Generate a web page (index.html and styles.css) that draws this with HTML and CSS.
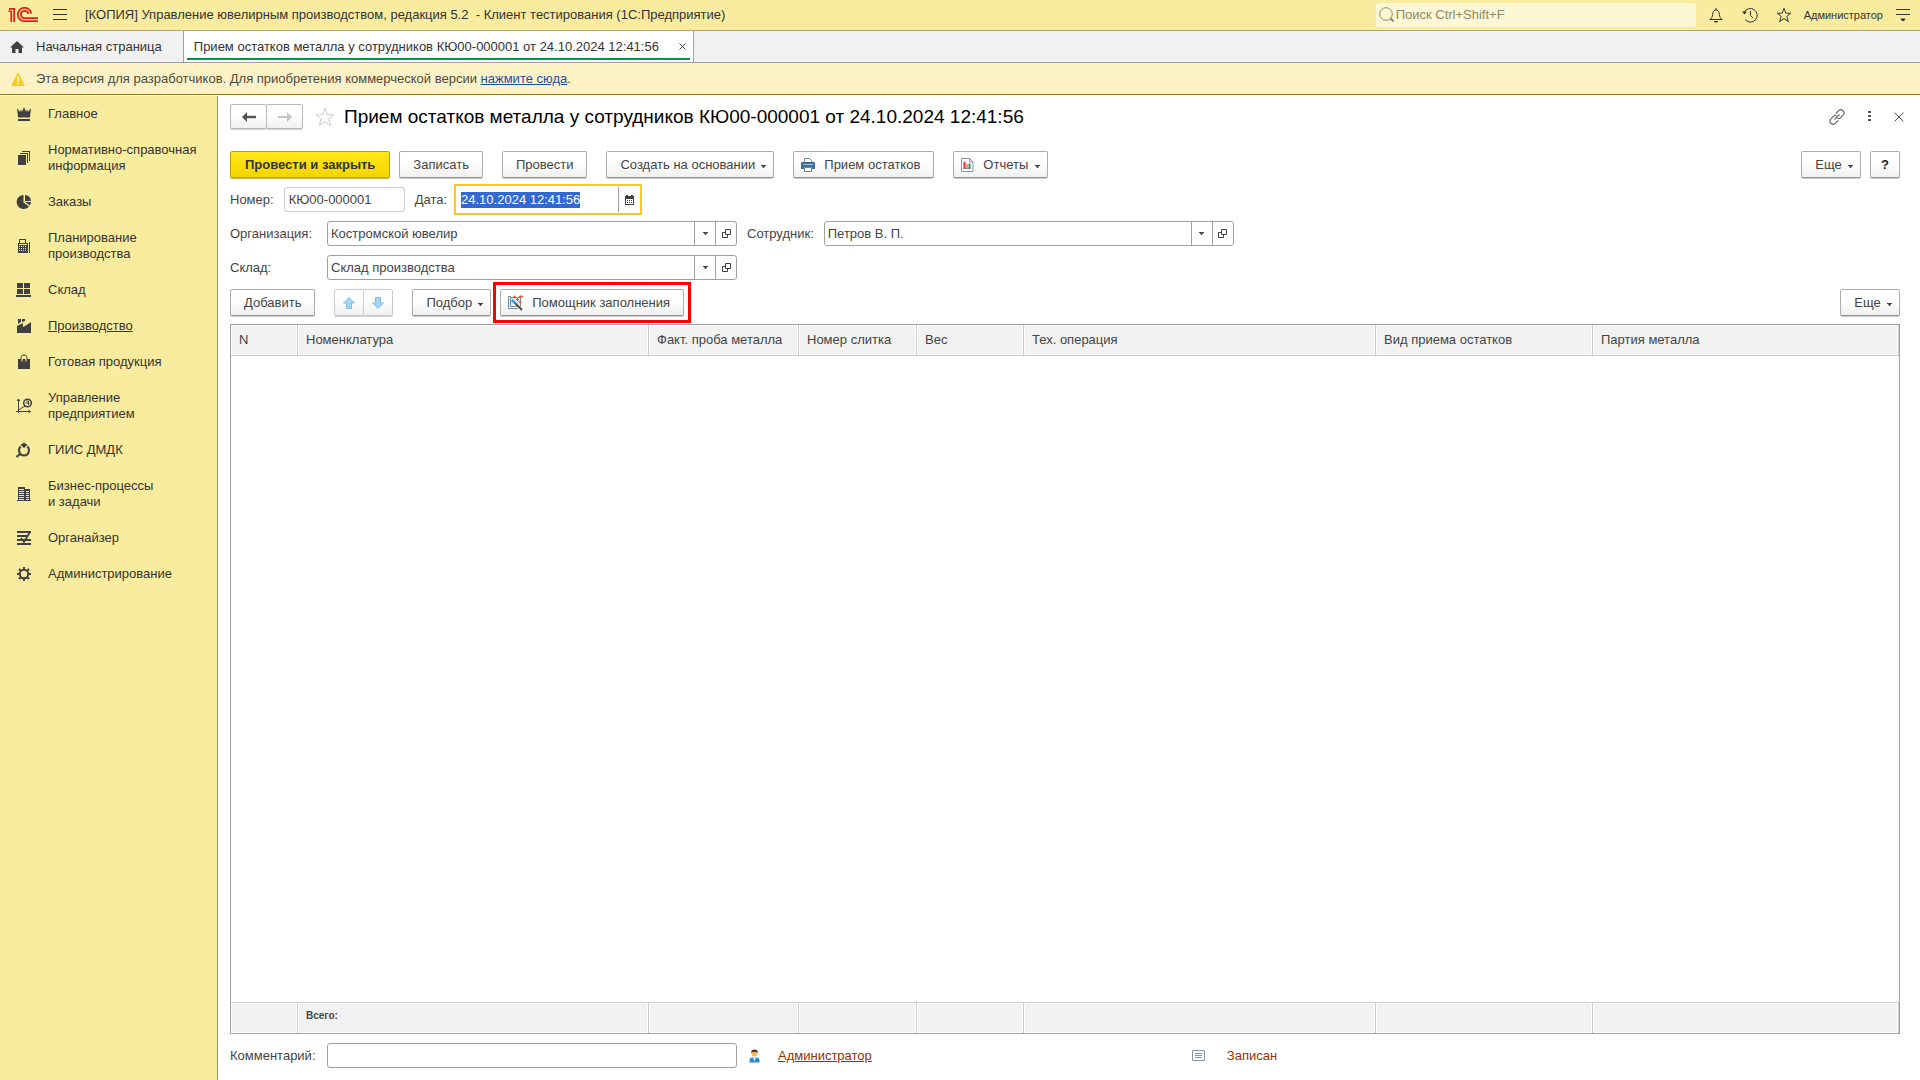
FILE: index.html
```html
<!DOCTYPE html>
<html lang="ru">
<head>
<meta charset="utf-8">
<meta name="viewport" content="width=device-width, initial-scale=1">
<title>Прием остатков металла у сотрудников КЮ00-000001</title>
<link rel="stylesheet" href="styles.css">
</head>
<body>
<svg class="defs" aria-hidden="true">
  <symbol id="caret" viewBox="0 0 5 3"><path d="M0 0h5v1H4L3 3H2L1 1H0z" fill="#404040"/></symbol>
  <symbol id="open" viewBox="0 0 9 9"><path d="M3.500.5h5v5h-5zM3 3.500H.5v5h5V6" fill="none" stroke="#404040"/></symbol>
</svg>

<header class="topbar">
  <svg class="logo" viewBox="0 0 30 16" fill="none" stroke="#d9251d" stroke-width="1.800"><path d="M.5 4.200h2.300M3.300 4v11M1 1.800h5.200V15M23.200 6.500A6.700 6.700 0 1 0 16.500 14.200H30M20.300 7A3.700 3.700 0 1 0 16.500 11.200H30"/></svg>
  <button class="icon-btn" aria-label="Меню"><svg width="14" height="12" viewBox="0 0 14 12"><path d="M0 .5h14M0 5.500h14M0 10.500h14" stroke="#333"/></svg></button>
  <h1 class="app-title">[КОПИЯ] Управление ювелирным производством, редакция 5.2&nbsp; - Клиент тестирования (1С:Предприятие)</h1>
  <label class="search">
    <svg width="16" height="16" viewBox="0 0 16 16" fill="none" stroke="#8f8a6b"><circle cx="7" cy="7" r="6.300"/><path d="M11.500 11.500l3 3" stroke-width="2"/></svg>
    <input type="text" placeholder="Поиск Ctrl+Shift+F" aria-label="Поиск">
  </label>
  <div class="top-tools">
    <button class="icon-btn" aria-label="Уведомления"><svg width="16" height="16" viewBox="0 0 16 16" fill="none" stroke="#333"><path d="M1.500 12.500h13M2.500 12c2-1.500 2-4 2.500-6.500.4-1.800 1.500-2.500 3-2.500s2.600.7 3 2.500c.5 2.500.5 5 2.500 6.500M8 3V1"/><path d="M5.500 14h5L9 15.500H7z" fill="#333" stroke="none"/></svg></button>
    <button class="icon-btn" aria-label="История"><svg width="16" height="16" viewBox="0 0 16 16" fill="none" stroke="#333"><path d="M2.200 5.500A6.800 6.800 0 1 1 3 12.500M8.500 4v4.500l2.500 2.500"/><path d="M0 4.500h5L2.500 7.500z" fill="#333" stroke="none"/></svg></button>
    <button class="icon-btn" aria-label="Избранное"><svg width="16" height="16" viewBox="0 0 16 16" fill="none" stroke="#333"><path d="M8 1.300l1.800 4.900h5l-4 3.200 1.500 5.200L8 11.600l-4.300 3 1.500-5.200-4-3.200h5z"/></svg></button>
  </div>
  <span class="user">Администратор</span>
  <button class="icon-btn" aria-label="Сервис"><svg width="14" height="14" viewBox="0 0 14 14"><path d="M0 1.500h14M0 6.500h14" stroke="#333"/><path d="M4.500 10.500h5L8 13H6z" fill="#333"/></svg></button>
</header>

<nav class="tabs">
  <a class="tab home" href="#"><svg width="14" height="12" viewBox="0 0 14 12"><path d="M7 0l7 6.500h-2V12H8.500V8h-3v4H2V6.500H0z" fill="#404040"/></svg>Начальная страница</a>
  <div class="tab current"><a href="#">Прием остатков металла у сотрудников КЮ00-000001 от 24.10.2024 12:41:56</a><button class="icon-btn" aria-label="Закрыть вкладку"><svg width="7" height="7" viewBox="0 0 7 7"><path d="M.5.5l6 6M6.500.5l-6 6" stroke="#444"/></svg></button></div>
</nav>

<div class="notice">
  <svg width="14" height="14" viewBox="0 0 14 14"><path d="M7 0l7 14H0z" fill="#fbc91b"/><path d="M7 4.500v5M7 10.500v2" stroke="#fff" stroke-width="1.500"/></svg>
  <p>Эта версия для разработчиков. Для приобретения коммерческой версии <a href="#">нажмите сюда</a>.</p>
</div>

<div class="workspace">
  <nav class="sidebar">
    <a href="#"><svg viewBox="0 0 16 16"><path d="M1 2l3 4L5 3l1 3L8 1l2 5 1-3 1 3 3-4-1 9.500H2zM2 13h12v2H2z"/></svg><span>Главное</span></a>
    <a href="#"><svg viewBox="0 0 16 16"><path d="M2 5h8v10H2zM4 3h8v10h-1V4H4zM6 1h8v10h-1V2H6z"/></svg><span>Нормативно-справочная информация</span></a>
    <a href="#"><svg viewBox="0 0 16 16"><path d="M7.500 1v7.500L13 12.500A7 7 0 1 1 7.500 1zM9 1a6 6 0 0 1 6 6H9zM9 8h6a6 6 0 0 1-1.200 3.500z"/></svg><span>Заказы</span></a>
    <a href="#"><svg viewBox="0 0 16 16"><path fill-rule="evenodd" d="M2 5h1V1h7v4h2v10H2zM4 2v3h5V2zM3 6v1h8V6zm0 2v1h1V8zm2 0v1h1V8zm2 0v1h1V8zm2 0v1h1V8zm-6 2v1h1v-1zm2 0v1h1v-1zm2 0v1h1v-1zm2 0v1h1v-1zm-6 2v1h1v-1zm2 0v1h1v-1zm2 0v1h1v-1zm2 0v1h1v-1zM13 4h1v11h-1z"/></svg><span>Планирование производства</span></a>
    <a href="#"><svg viewBox="0 0 16 16"><path d="M1 1h6v5H1zM8 1h6v5H8zM1 7h6v5H1zM8 7h6v5H8zM0 13h15v2H0z"/></svg><span>Склад</span></a>
    <a href="#" class="active"><svg viewBox="0 0 16 16"><path d="M1 15V8l6-3v4l2-1 6-4v11zM2 1h3v3L2 6zM6 1h3v2L6 4z"/></svg><span>Производство</span></a>
    <a href="#"><svg viewBox="0 0 16 16"><path d="M2 5h12v10H2z"/><path d="M5 7V3.500Q5 1 8 1t3 2.500V7" fill="none" stroke="#404040"/><path d="M6 5v2.500M10 5v2.500" stroke="#faec9e"/></svg><span>Готовая продукция</span></a>
    <a href="#"><svg viewBox="0 0 16 16"><path d="M2.500 1v14M0 13.500h14M3 12l4-3 3-1M1 3l1.500-2L4 3M12.500 12l2 1.500-2 1.500" fill="none" stroke="#404040"/><circle cx="11.500" cy="5" r="3.800" fill="none" stroke="#404040" stroke-width="1.500"/><path d="M10.500 3h2v4M9.500 5h4" fill="none" stroke="#404040"/></svg><span>Управление предприятием</span></a>
    <a href="#"><svg viewBox="0 0 16 16"><path d="M4.500 3L8 .5 11.500 3 8 6z"/><path d="M4.500 4.500C1.500 8 3.500 13.500 8 13.500S14.500 8 11.500 4.500M4 12l-3.500 3" fill="none" stroke="#404040" stroke-width="2"/></svg><span>ГИИС ДМДК</span></a>
    <a href="#"><svg viewBox="0 0 16 16"><path fill-rule="evenodd" d="M2 1h7v2h5v11h1v1H1v-1h1zM3 3v1h5V3zm0 2v1h5V5zm0 2v1h5V7zm0 2v1h5V9zm0 2v1h5v-1zm0 2v1h5v-1zm7-8v1h3V5zm0 2v1h3V7zm0 2v1h3V9zm0 2v1h3v-1zm0 2v1h3v-1z"/></svg><span>Бизнес-процессы<br>и задачи</span></a>
    <a href="#"><svg viewBox="0 0 16 16"><path d="M1 2h14M1 6h11M1 10h14M1 14h14M5 8l3 4 6-10" fill="none" stroke="#404040" stroke-width="1.800"/></svg><span>Органайзер</span></a>
    <a href="#"><svg viewBox="0 0 16 16"><circle cx="8" cy="8" r="4.200" fill="none" stroke="#404040" stroke-width="2"/><path d="M8 1v2.500M8 12.500V15M1 8h2.500M12.500 8H15M3 3l2 2M11 11l2 2M13 3l-2 2M5 11l-2 2" stroke="#404040" stroke-width="2"/></svg><span>Администрирование</span></a>
  </nav>

  <main class="document">
    <div class="doc-head">
      <div class="btn-pair nav-pair">
        <button class="btn" aria-label="Назад"><svg width="14" height="10" viewBox="0 0 14 10"><path d="M0 5l5-5v3.800h9v2.400H5V10z" fill="#555"/></svg></button>
        <button class="btn" aria-label="Вперед" disabled><svg width="14" height="10" viewBox="0 0 14 10"><path d="M14 5L9 0v4H0v2h9v4z" fill="#c4c4c4"/></svg></button>
      </div>
      <button class="icon-btn" aria-label="В избранное"><svg width="20" height="20" viewBox="0 0 20 20"><path d="M10 1.500l2.300 6.300H19l-5.300 4.100 1.900 6.600L10 14.700l-5.600 3.800 1.900-6.600L1 7.800h6.700z" fill="none" stroke="#ccc"/></svg></button>
      <h2>Прием остатков металла у сотрудников КЮ00-000001 от 24.10.2024 12:41:56</h2>
      <div class="doc-tools">
        <button class="icon-btn" aria-label="Ссылка"><svg width="16" height="16" viewBox="0 0 16 16" fill="none" stroke="#666" stroke-width="1.200"><path d="M7 4.500l2.500-2.700a3 3 0 0 1 4.500 4.400l-2.500 2.600q-1.500 1.200-3 .4M9 11.500l-2.500 2.700A3 3 0 0 1 2 9.800l2.500-2.600q1.500-1.200 3-.4M5.500 10.500l5-5"/></svg></button>
        <button class="icon-btn" aria-label="Дополнительно"><svg width="3" height="11" viewBox="0 0 3 11"><path d="M0 0h3v2H0zM0 4h3v2H0zM0 8h3v2H0z" fill="#555"/></svg></button>
        <button class="icon-btn" aria-label="Закрыть"><svg width="10" height="10" viewBox="0 0 10 10"><path d="M.5.5l9 9M9.500.5l-9 9" stroke="#555"/></svg></button>
      </div>
    </div>

    <div class="toolbar">
      <button class="btn primary">Провести и закрыть</button>
      <button class="btn">Записать</button>
      <button class="btn apart">Провести</button>
      <button class="btn apart">Создать на основании<svg class="caret"><use href="#caret"/></svg></button>
      <button class="btn apart with-icon"><svg width="14" height="14" viewBox="0 0 14 14"><path d="M3.500 4V.5h5l2 2V4" fill="#fff" stroke="#6c87a3"/><path d="M0 5q0-1 1-1h12q1 0 1 1v6h-3V9H3v2H0z" fill="#3f6c97"/><path d="M2 6.500h10" stroke="#a9c6de"/><path d="M3.500 9.500h7v4h-7z" fill="#fff" stroke="#6c87a3"/></svg>Прием остатков</button>
      <button class="btn apart with-icon"><svg width="13" height="14" viewBox="0 0 13 14"><path d="M.5.5h8l3.500 3.500v9.500H.5z" fill="#fff" stroke="#8496a5"/><path d="M8.500.5V4H12" fill="none" stroke="#8496a5"/><path d="M3.500 4v6" stroke="#e22" stroke-width="2"/><path d="M6 6v4" stroke="#e22"/><path d="M8.500 5.500V10" stroke="#1a9b3a" stroke-width="2"/><path d="M2 10.500h8" stroke="#789"/></svg>Отчеты<svg class="caret"><use href="#caret"/></svg></button>
      <button class="btn more push">Еще<svg class="caret"><use href="#caret"/></svg></button>
      <button class="btn help">?</button>
    </div>

    <form class="fields">
      <div class="row">
        <label for="number">Номер:</label>
        <input class="box number" id="number" type="text" value="КЮ00-000001" readonly>
        <label for="date">Дата:</label>
        <div class="date">
          <input id="date" type="text" value="24.10.2024 12:41:56" autofocus>
          <button type="button" aria-label="Выбрать дату"><svg width="9" height="10" viewBox="0 0 9 10"><path fill-rule="evenodd" d="M0 1h1V0h2v1h3V0h2v1h1v9H0zM1 4v5h7V4z" fill="#404040"/><path d="M2 5.500h5M2 7.500h5" stroke="#404040" stroke-dasharray="1 1"/></svg></button>
        </div>
      </div>
      <div class="row">
        <label class="key" for="org">Организация:</label>
        <div class="box picker"><input id="org" type="text" value="Костромской ювелир"><button type="button" aria-label="Список организаций"><svg class="caret"><use href="#caret"/></svg></button><button type="button" aria-label="Открыть организацию"><svg width="9" height="9"><use href="#open"/></svg></button></div>
        <label for="employee">Сотрудник:</label>
        <div class="box picker"><input id="employee" type="text" value="Петров В. П."><button type="button" aria-label="Список сотрудников"><svg class="caret"><use href="#caret"/></svg></button><button type="button" aria-label="Открыть сотрудника"><svg width="9" height="9"><use href="#open"/></svg></button></div>
      </div>
      <div class="row">
        <label class="key" for="store">Склад:</label>
        <div class="box picker"><input id="store" type="text" value="Склад производства"><button type="button" aria-label="Список складов"><svg class="caret"><use href="#caret"/></svg></button><button type="button" aria-label="Открыть склад"><svg width="9" height="9"><use href="#open"/></svg></button></div>
      </div>
    </form>

    <div class="toolbar table-tools">
      <button class="btn">Добавить</button>
      <div class="btn-pair move-pair apart">
        <button class="btn" aria-label="Вверх" disabled><svg width="12" height="12" viewBox="0 0 12 12"><path d="M6 .5L11.500 6H8.500v5.500h-5V6H.5z" fill="#9fd6f5" stroke="#86bfe0"/></svg></button>
        <button class="btn" aria-label="Вниз" disabled><svg width="12" height="12" viewBox="0 0 12 12"><path d="M6 11.500L.5 6h3V.5h5V6h3z" fill="#9fd6f5" stroke="#86bfe0"/></svg></button>
      </div>
      <button class="btn apart pick">Подбор<svg class="caret"><use href="#caret"/></svg></button>
      <div class="highlight"><button class="btn with-icon"><svg width="15" height="16" viewBox="0 0 15 16"><path d="M3 1.500H.5v12H10" fill="none" stroke="#6f8fa8"/><path d="M2.500 2.500h10v9h-10z" fill="#e3f0f9" stroke="#6f8fa8"/><path d="M4 5l3 3" stroke="#3b9be0" stroke-width="2.500"/><path d="M7 8l7 7" stroke="#6b4a1c" stroke-width="2"/><path d="M5 2h3M6.500.5v3M11 1.500h4M13 0v3.500M8 4.500h3M9.500 3v3M10.500 7h3M12 5.500v3" stroke="#f04a28"/></svg>Помощник заполнения</button></div>
      <button class="btn more push">Еще<svg class="caret"><use href="#caret"/></svg></button>
    </div>

    <div class="grid">
      <table>
        <colgroup><col class="c-n"><col class="c-item"><col class="c-fine"><col class="c-bar"><col class="c-weight"><col class="c-op"><col class="c-kind"><col></colgroup>
        <thead><tr><th>N</th><th>Номенклатура</th><th>Факт. проба металла</th><th>Номер слитка</th><th>Вес</th><th>Тех. операция</th><th>Вид приема остатков</th><th>Партия металла</th></tr></thead>
        <tbody><tr><td colspan="8"></td></tr></tbody>
        <tfoot><tr><td></td><td>Всего:</td><td></td><td></td><td></td><td></td><td></td><td></td></tr></tfoot>
      </table>
    </div>

    <footer class="doc-foot">
      <label class="key" for="comment">Комментарий:</label>
      <input class="box comment" id="comment" type="text">
      <svg width="11" height="14" viewBox="0 0 11 14"><path d="M.5 13.500V11q0-2.500 3-2.500h4q3 0 3 2.500v2.500z" fill="#2f8cc4"/><path d="M4 8.500h3L5.500 12z" fill="#fff"/><circle cx="5.500" cy="4.500" r="3" fill="#f3b765"/><path d="M2 4.500Q2 .5 5.500.5T9 4.500L8 3H3z" fill="#4a3a25"/></svg>
      <a class="author" href="#">Администратор</a>
      <div class="state"><svg width="13" height="11" viewBox="0 0 13 11"><path d="M.5.5h12v10H.5z" fill="#fff" stroke="#8496a5"/><path d="M3 3.500h7M3 5.500h7M3 7.500h7" stroke="#8496a5"/></svg><span>Записан</span></div>
    </footer>
  </main>
</div>
<script>document.getElementById('date').select();</script>
</body>
</html>
```
FILE: styles.css
```css
* { box-sizing: border-box; }
body {
  margin: 0;
  min-height: 100vh;
  display: flex;
  flex-direction: column;
  background: #fff;
  color: #333;
  font: 13px/16px "Liberation Sans", Arial, sans-serif;
}
.defs { position: absolute; width: 0; height: 0; }
svg { display: block; flex: none; }
button, input { font: inherit; color: inherit; }
h1, h2, p { margin: 0; font-weight: normal; }
.icon-btn {
  display: flex;
  align-items: center;
  justify-content: center;
  padding: 0;
  border: 0;
  background: none;
}

/* Application bar */
.topbar {
  display: flex;
  align-items: center;
  height: 31px;
  padding: 0 10px 0 8px;
  background: #faec9e;
  border-bottom: 1px solid #b0a870;
}
.logo { width: 30px; height: 16px; margin-right: 15px; }
.app-title { flex: 1; margin-left: 18px; font-size: 13px; white-space: nowrap; }
.search {
  display: flex;
  align-items: center;
  gap: 1px;
  width: 320px;
  height: 24px;
  padding-left: 3px;
  border-radius: 2px;
  background: #fdf7d5;
}
.search input {
  flex: 1;
  min-width: 0;
  padding: 0;
  border: 0;
  background: none;
  outline: none;
}
.search input::placeholder { color: #8f8a6b; }
.top-tools { display: flex; gap: 18px; margin: 0 12px; }
.user { margin-right: 13px; font-size: 11px; }

/* Window tabs */
.tabs {
  display: flex;
  height: 32px;
  background: #f1f1f1;
  border-bottom: 1px solid #a0a0a0;
}
.tab {
  display: flex;
  align-items: center;
  color: #333;
  border-right: 1px solid #a0a0a0;
}
.tab a { color: inherit; text-decoration: none; }
.home { gap: 12px; padding: 0 21px 0 10px; text-decoration: none; }
.current {
  gap: 20px;
  padding: 0 7px 0 10px;
  background: linear-gradient(#009646, #009646) center bottom 2px / calc(100% - 6px) 2px no-repeat #fff;
}

.notice {
  display: flex;
  align-items: center;
  gap: 11px;
  height: 32px;
  padding-left: 11px;
  color: #4d4a3c;
  background: #fdf2c6;
  border-bottom: 1px solid #94781c;
}
.notice a { color: #1a4fae; }

.workspace { flex: 1; display: flex; padding-top: 1px; }

/* Sections */
.sidebar {
  flex: none;
  width: 218px;
  background: #faec9e;
  border-right: 1px solid #948c5c;
}
.sidebar a {
  display: flex;
  align-items: center;
  gap: 16px;
  padding: 10px 8px 10px 16px;
  color: #333;
  text-decoration: none;
}
.sidebar svg { width: 16px; height: 16px; fill: #404040; }
.sidebar .active { text-decoration: underline; }

/* Document form */
.document {
  flex: 1;
  min-width: 0;
  display: flex;
  flex-direction: column;
  padding: 8px 20px 12px 12px;
  color: #444;
}
.doc-head { display: flex; align-items: center; height: 25px; gap: 12px; }
.doc-head h2 { margin-left: -3px; color: #000; font-size: 19px; line-height: 24px; white-space: nowrap; }
.doc-tools { display: flex; align-items: center; gap: 23px; margin: 0 -4px 0 auto; }

.btn {
  display: flex;
  align-items: center;
  justify-content: center;
  height: 27px;
  padding: 0 13px;
  border: 1px solid #adadad;
  border-bottom-color: #8f8f8f;
  border-radius: 2px;
  background: linear-gradient(#fff 40%, #f1f1f1);
  box-shadow: 0 1px 0 #d0d0d0;
  color: #444;
  white-space: nowrap;
}
.btn:disabled { border-color: #ccc; }
.btn-pair { display: flex; }
.btn-pair .btn { padding: 0; width: 30px; }
.btn-pair .btn + .btn { margin-left: -1px; }
.nav-pair .btn { width: 37px; height: 25px; border-color: #b8b8b8; }
.primary {
  padding: 0 14px;
  border-color: #bfa000;
  background: linear-gradient(#ffe81a, #f5d500);
  box-shadow: 0 1px 0 #c9b75a;
  color: #333;
  font-weight: bold;
}
.with-icon { gap: 9px; padding-left: 7px; }
.caret { width: 5px; height: 3px; }
.btn .caret { margin: 3px -6px 0 6px; }
.with-icon .caret { margin-left: -2px; }

.toolbar { display: flex; align-items: center; gap: 9px; margin-top: 22px; }
.apart { margin-left: 10px; }
.push { margin-left: auto; }
.more { width: 60px; }
.help { width: 30px; padding: 0; font-weight: bold; color: #222; }

.fields { display: grid; gap: 9px; margin-top: 6px; }
.row { display: flex; align-items: center; gap: 10px; }
.row:first-child { margin-bottom: -3px; }
.key { width: 87px; white-space: nowrap; }
.box {
  height: 25px;
  border: 1px solid #a0a0a0;
  border-radius: 3px;
  background: #fff;
}
input.box { padding: 0 4px; outline: none; }
.number { width: 121px; border-color: #ccc; }
.date {
  display: flex;
  align-items: stretch;
  width: 188px;
  height: 31px;
  margin-left: -3px;
  padding: 1px;
  border: 2px solid #fac81e;
}
.date input { flex: 1; min-width: 0; padding: 0 4px; border: 0; outline: none; }
.date input::selection { background: #3367d1; color: #fff; }
.date button {
  display: grid;
  place-items: center;
  width: 21px;
  padding: 0;
  border: 0;
  border-left: 1px solid #a0a0a0;
  background: none;
}
.picker { display: flex; width: 410px; }
.picker input { flex: 1; min-width: 0; padding: 0 3px; border: 0; outline: none; background: none; }
.picker button {
  display: grid;
  place-items: center;
  width: 21px;
  padding: 0;
  border: 0;
  border-left: 1px solid #a0a0a0;
  background: none;
}

.table-tools { height: 41px; margin-top: 2px; }
.pick { margin-right: -7px; }
.highlight { padding: 4px; border: 3px solid #f00; }

.grid {
  flex: 1;
  display: flex;
  flex-direction: column;
  margin-top: 1px;
  border: 1px solid #a0a0a0;
}
.grid table { flex: 1; width: 100%; border-collapse: separate; border-spacing: 0; table-layout: fixed; }
.c-n { width: 67px; }
.c-item { width: 351px; }
.c-fine { width: 150px; }
.c-bar { width: 118px; }
.c-weight { width: 107px; }
.c-op { width: 352px; }
.c-kind { width: 217px; }
.grid th, .grid tfoot td {
  padding: 0 8px;
  border-right: 1px solid #ccc;
  background: #f2f2f2;
  box-shadow: inset 0 0 0 1px #fff;
  text-align: left;
  font-weight: normal;
  white-space: nowrap;
}
.grid th { height: 31px; border-bottom: 1px solid #ccc; }
.grid tfoot td { height: 31px; padding-bottom: 4px; border-top: 1px solid #ccc; font-size: 10px; font-weight: bold; }

.doc-foot { display: flex; align-items: center; gap: 10px; margin-top: 9px; }
.comment { width: 410px; margin-right: 2px; }
.author, .state { color: #963200; }
.author { margin-left: 8px; }
.state { display: flex; align-items: center; gap: 22px; margin-left: 310px; }
```
